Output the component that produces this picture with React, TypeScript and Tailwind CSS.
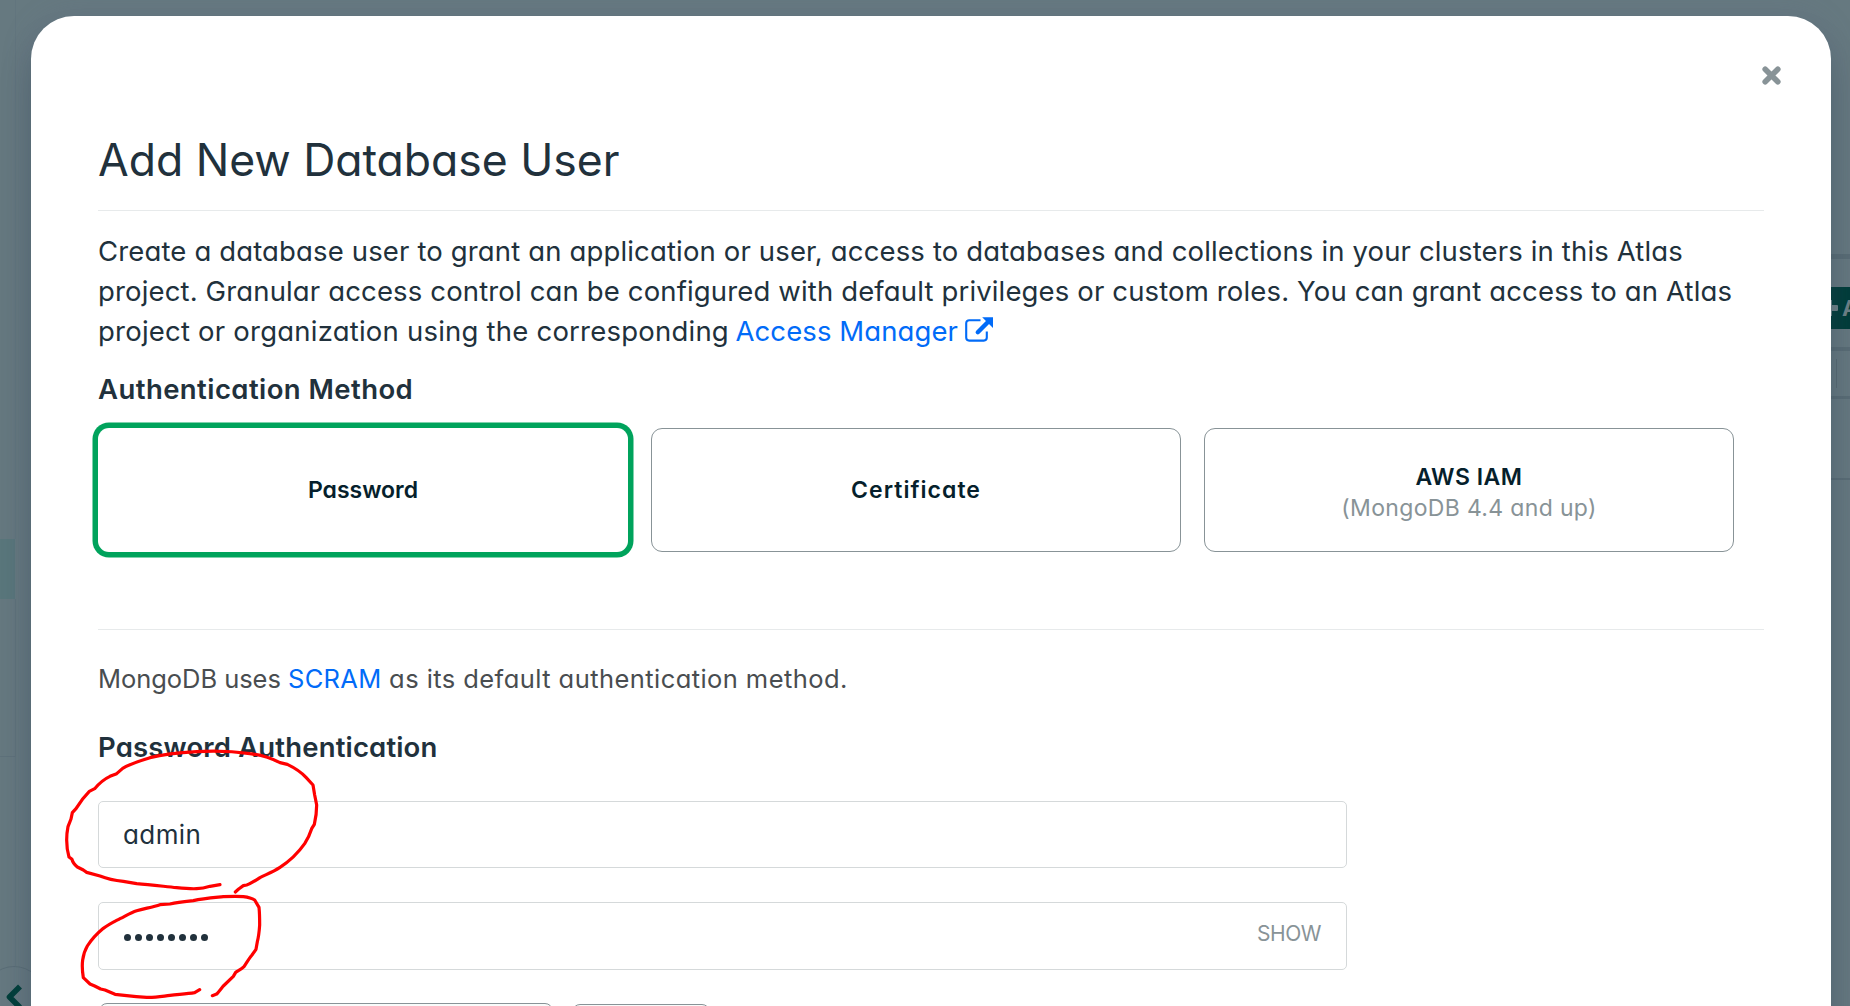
import type { ReactNode } from "react";

function SideStrip() {
  return (
    <aside className="flex w-[31px] shrink-0 flex-col">
      <div className="h-[539px] w-4 border-r border-[#62757e]" />
      <div className="h-[60px] w-[15px] bg-[#5a777c]" />
      <div className="h-[158px] w-4 border-r border-b border-[#5f727b]" />
      <div className="relative h-[249px] overflow-hidden">
        <div className="h-full w-4 border-r border-[#61747d]" />
        <div className="absolute top-[209px] left-[-17px] size-[62px] rounded-full border border-[#5b6e77] bg-[#667981]" />
        <svg className="absolute top-[226px] left-[5px]" width="18" height="26" viewBox="0 0 18 26" fill="none" stroke="#023f3b" strokeWidth="5.6">
          <path d="M15 3.5 4.5 14 15 24.5" strokeLinejoin="round" />
        </svg>
      </div>
    </aside>
  );
}

function ContentStrip() {
  return (
    <div className="flex w-[19px] shrink-0 flex-col overflow-hidden">
      <div className="h-[254px]" />
      <div className="h-[5px] bg-[#5a6d76]" />
      <div className="h-7" />
      <div className="flex h-[42px] items-center gap-1 overflow-hidden bg-[#003d3a] text-[#6f8288]">
        <svg className="shrink-0" width="7" height="18" viewBox="0 0 7 18" fill="currentColor">
          <path d="M0 1h1v5h5a1 1 0 0 1 1 1v4a1 1 0 0 1-1 1H1v5H0z" />
        </svg>
        <span className="text-[22px] font-bold">A</span>
      </div>
      <div className="h-[18px]" />
      <div className="h-1 bg-[#5a6d76]" />
      <div className="flex h-[45px] items-center pl-[5px]">
        <div className="h-[29px] w-px bg-[#586b74]" />
      </div>
      <div className="h-[3px] bg-[#5a6d76]" />
      <div className="h-[79px]" />
      <div className="h-0.5 bg-[#5a6d76]" />
    </div>
  );
}

function MethodCard({ selected = false, children }: { selected?: boolean; children: ReactNode }) {
  return (
    <button
      className={
        selected
          ? "flex h-[124px] w-[530px] flex-col items-center justify-center rounded-[11px] bg-white text-[23px] leading-[31px] font-semibold text-[#061f2c] shadow-[0_0_0_5.5px_#00a35c]"
          : "flex h-[124px] w-[530px] flex-col items-center justify-center rounded-[11px] border border-[#889397] bg-white text-[23px] leading-[31px] font-semibold text-[#061f2c]"
      }
    >
      {children}
    </button>
  );
}

function ExternalLinkIcon() {
  return (
    <svg className="absolute top-[6px] left-[229px]" width="28" height="25" viewBox="0 0 28 25" fill="none">
      <path d="M15.5 3.2H4.2a3 3 0 0 0-3 3v14.4a3 3 0 0 0 3 3h14.6a3 3 0 0 0 3-3v-6" stroke="#016bf8" strokeWidth="2.1" />
      <path d="M12.8 15.2 23 5" stroke="#016bf8" strokeWidth="4.4" strokeLinecap="round" />
      <path d="M17.2 0.3H28V11z" fill="#016bf8" />
    </svg>
  );
}

function RedMarks() {
  return (
    <svg
      className="pointer-events-none absolute top-[714px] left-[19px]"
      width="300"
      height="276"
      viewBox="0 0 900 828"
      fill="none"
      stroke="#ff0000"
      strokeWidth="9.6"
      strokeLinecap="round"
      strokeLinejoin="round"
    >
      <path d="M510 464 480 469C462 475 448 476 440 476C420 477 400 475 380 473C340 469 300 464 260 461L220 454C190 451 170 446 150 438L110 427L100 420L82 411C74 404 68 398 66 388L57 381C52 364 50 348 50 330C50 310 52 300 54 290L63 267L67 248L78 236C90 216 102 200 118 184L134 176C150 157 165 146 180 139L200 131L218 115C240 102 270 92 300 83C350 70 400 67 440 65C490 62 550 64 600 71C635 75 660 83 690 98L712 103C735 114 755 128 768 142L789 165L794 195L800 225C800 245 796 270 793 283L785 296C780 312 774 325 764 341C745 368 715 396 690 412C670 425 650 433 630 443C612 455 600 462 590 465L580 467L566 477L556 486" />
      <path d="M449 779 434 788C410 792 385 793 360 796C335 799 315 803 290 802C265 801 245 799 230 797L195 793L165 780L152 777L134 768L120 762L100 743C97 725 96 705 98 690C101 670 106 658 112 648C125 628 142 610 160 595C178 582 195 574 210 566C230 556 242 548 260 542C285 535 310 531 330 524L360 522C385 516 410 514 430 512C460 505 490 503 520 500C545 499 570 499 580 500C595 502 606 505 614 510L627 532C629 550 629 570 629 585C628 600 626 620 622 635L618 658L606 675C598 684 592 695 582 710C574 718 564 722 557 727L550 739L520 768C512 778 506 786 500 792L487 797" />
    </svg>
  );
}

export default function App() {
  return (
    <div className="relative flex h-[1006px] w-[1850px] overflow-hidden bg-[#667980] font-['Inter',sans-serif] [font-feature-settings:'cv11']">
      <SideStrip />
      <main className="relative mt-4 h-[1060px] w-[1800px] shrink-0 rounded-[43px] bg-white px-[67px] text-[#21313c] shadow-[0_24px_36px_-6px_rgba(0,30,43,0.3),0_0_30px_rgba(90,100,130,0.22)]">
        <button aria-label="Close" className="absolute top-[50px] right-[50px]">
          <svg width="19" height="19" viewBox="0 0 19 19" fill="none" stroke="#889397" strokeWidth="5.6" strokeLinecap="round">
            <path d="M3.2 3.2 15.8 15.8M15.8 3.2 3.2 15.8" />
          </svg>
        </button>
        <h1 className="pt-[114px] text-[44.5px] leading-[60px] tracking-[-0.02px]">Add New Database User</h1>
        <hr className="mt-5 border-[#e7eaeb]" />
        <p className="mt-5 text-[27.5px] leading-10 whitespace-nowrap">
          <span className="block tracking-[0.147px]">
            Create a database user to grant an application or user, access to databases and collections in your clusters in this Atlas
          </span>
          <span className="block tracking-[0.144px]">
            project. Granular access control can be configured with default privileges or custom roles. You can grant access to an Atlas
          </span>
          <span className="flex">
            <span className="w-[637.5px] tracking-[0.22px]">project or organization using the corresponding</span>
            <a className="relative tracking-[0.09px] text-[#016bf8]">
              Access Manager
              <ExternalLinkIcon />
            </a>
          </span>
        </p>
        <h2 className="mt-[18px] text-[27.5px] leading-10 font-semibold tracking-[0.43px]">Authentication Method</h2>
        <div className="mt-[19px] flex gap-[23px]">
          <MethodCard selected>Password</MethodCard>
          <MethodCard>
            <span className="tracking-[1.03px]">Certificate</span>
          </MethodCard>
          <MethodCard>
            <span className="pt-[5px] tracking-[0.5px]">AWS IAM</span>
            <span className="font-normal tracking-[0.34px] text-[#889397]">(MongoDB 4.4 and up)</span>
          </MethodCard>
        </div>
        <hr className="mt-[77px] border-[#e7eaeb]" />
        <p className="mt-[29px] text-[25.5px] leading-10 whitespace-pre text-[#494d50]">
          <span className="tracking-[-0.05px]">MongoDB uses </span>
          <a className="tracking-[0.3px] text-[#016bf8]">SCRAM</a>
          <span className="tracking-[0.43px]"> as its default authentication method.</span>
        </p>
        <h2 className="mt-7 text-[27.5px] leading-10 font-semibold tracking-[0.16px]">Password Authentication</h2>
        <div className="mt-[34px] flex h-[67px] w-[1249px] items-center rounded-[5px] border border-[#d5d9da] px-[24px] text-[26px] tracking-[0.4px]">
          admin
        </div>
        <div className="mt-[34px] flex h-[68px] w-[1249px] items-center justify-between rounded-[5px] border border-[#d5d9da] pr-[25px] pl-[25px]">
          <div className="flex gap-1 pt-[3px]">
            {Array.from({ length: 8 }, (_, i) => (
              <span key={i} className="size-[7px] rounded-full bg-[#21313c]" />
            ))}
          </div>
          <span className="-mt-1 text-[21px] tracking-[-0.46px] text-[#889397]">SHOW</span>
        </div>
        <div className="mt-[33px] ml-px flex gap-[19px]">
          <div className="h-12 w-[454px] rounded-[8px] border border-[#889397] bg-[#f9fbfa]" />
          <div className="mt-px h-12 w-[138px] rounded-[8px] border border-[#889397] bg-[#f9fbfa]" />
        </div>
        <RedMarks />
      </main>
      <ContentStrip />
    </div>
  );
}
